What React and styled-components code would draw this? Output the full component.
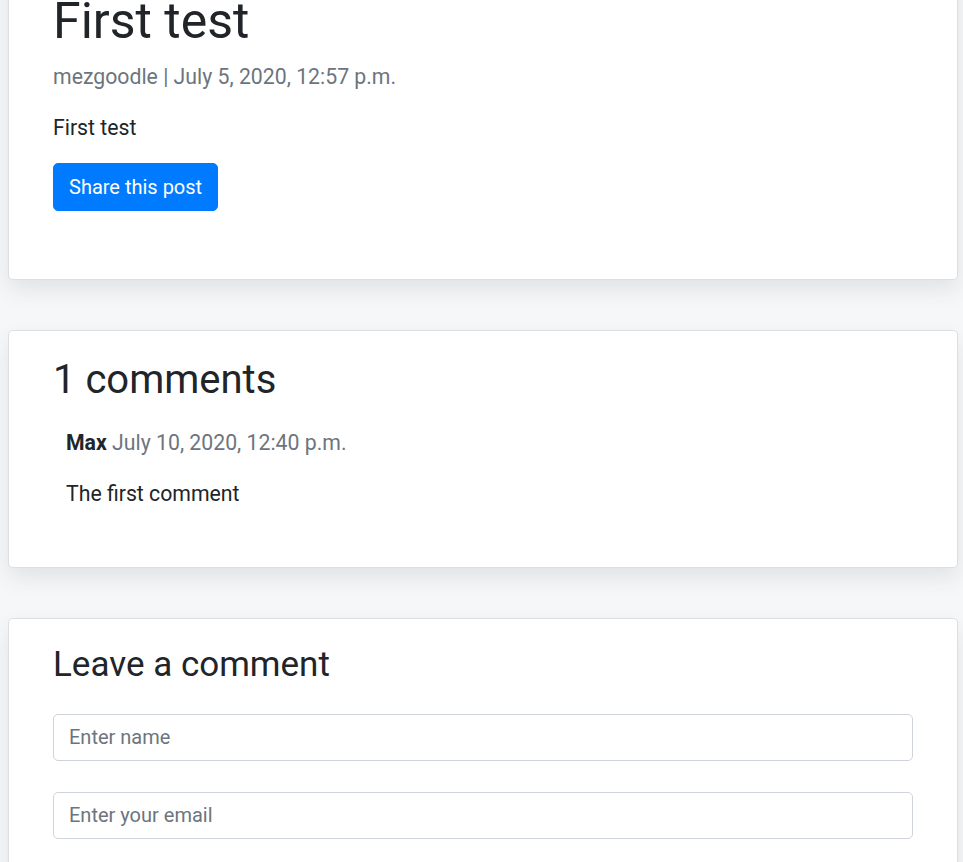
import React from 'react';
import styled, { createGlobalStyle } from 'styled-components';

const GlobalStyle = createGlobalStyle`
  html, body {
    margin: 0;
    padding: 0;
    background: #f6f7f8;
    font-family: Roboto, "Liberation Sans", Arial, sans-serif;
    font-size: 20px;
    line-height: 1.5;
    color: #212529;
    overflow: hidden;
  }
  * {
    box-sizing: border-box;
  }
`;

const Page = styled.div`
  margin-top: -35px;
  padding: 0 5px 0 8px;
`;

const Card = styled.div`
  background: #fff;
  border: 1px solid rgba(0, 0, 0, 0.125);
  border-radius: 5px;
  box-shadow: 0 10px 22px rgba(40, 55, 80, 0.1);
  padding: 25px 44px;
  margin-bottom: 50px;
`;

const Title = styled.h1`
  font-size: 50px;
  font-weight: 400;
  line-height: 1.2;
  margin: 0 0 10px;
`;

const SectionTitle = styled.h2`
  font-size: ${props => props.size || '40px'};
  font-weight: 400;
  line-height: 1.2;
  margin: 0 0 10px;
`;

const Muted = styled.span`
  color: #6c757d;
`;

const Text = styled.p`
  font-size: 21.25px;
  line-height: 1.5;
  color: ${props => (props.muted ? '#6c757d' : '#212529')};
  margin: 0 0 19px;
`;

const Actions = styled.div`
  margin-bottom: 43px;
`;

const Button = styled.button`
  font-family: inherit;
  font-size: 20px;
  line-height: 1.5;
  color: #fff;
  background: #007bff;
  border: 1px solid #007bff;
  border-radius: 5px;
  padding: 8px 15px;
  cursor: pointer;
`;

const Comment = styled.div`
  padding: 13px;
`;

const Author = styled.strong`
  font-weight: 700;
`;

const Form = styled.form`
  display: flex;
  flex-direction: column;
  gap: 31px;
  padding-top: 18px;
  padding-bottom: 40px;
`;

const Input = styled.input`
  display: block;
  width: 100%;
  height: 47px;
  padding: 7.5px 15px;
  font-family: inherit;
  font-size: 20px;
  line-height: 1.5;
  color: #495057;
  background: #fff;
  border: 1px solid #ced4da;
  border-radius: 5px;
  outline: none;
  &::placeholder {
    color: #6c757d;
  }
`;

const comments = [
  { author: 'Max', date: 'July 10, 2020, 12:40 p.m.', body: 'The first comment' },
];

export default function App() {
  return (
    <Page>
      <GlobalStyle />
      <Card>
        <Title>First test</Title>
        <Text muted>mezgoodle | July 5, 2020, 12:57 p.m.</Text>
        <Text>First test</Text>
        <Actions>
          <Button type="button">Share this post</Button>
        </Actions>
      </Card>

      <Card>
        <SectionTitle>{comments.length} comments</SectionTitle>
        {comments.map(c => (
          <Comment key={c.author + c.date}>
            <Text>
              <Author>{c.author}</Author> <Muted>{c.date}</Muted>
            </Text>
            <Text>{c.body}</Text>
          </Comment>
        ))}
      </Card>

      <Card>
        <SectionTitle size="35px">Leave a comment</SectionTitle>
        <Form onSubmit={e => e.preventDefault()}>
          <Input type="text" placeholder="Enter name" />
          <Input type="email" placeholder="Enter your email" />
        </Form>
      </Card>
    </Page>
  );
}
